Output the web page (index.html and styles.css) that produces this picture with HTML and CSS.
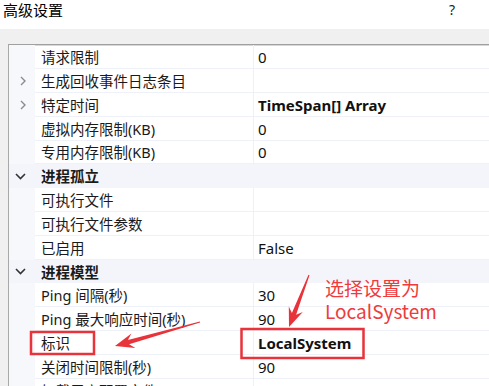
FILE: index.html
```html
<!DOCTYPE html>
<html>
  <head>
    <meta charset="utf-8">
    <title>高级设置</title>
    <link rel="stylesheet" href="styles.css">
  </head>
  <body>
    <div class="titlebar">
      <span class="title">高级设置</span>
      <span class="help">?</span>
    </div>
    <div class="band"></div>

    <div class="grid">
      <div class="row"><div class="gut"></div><div class="name">请求限制</div><div class="val">0</div></div>
      <div class="row"><div class="gut"><svg class="chev-r" width="6" height="10" viewBox="0 0 6 10"><path d="M1 1 L5 5 L1 9" fill="none" stroke="#8c8c8c" stroke-width="1.4"/></svg></div><div class="name">生成回收事件日志条目</div><div class="val"></div></div>
      <div class="row"><div class="gut"><svg class="chev-r" width="6" height="10" viewBox="0 0 6 10"><path d="M1 1 L5 5 L1 9" fill="none" stroke="#8c8c8c" stroke-width="1.4"/></svg></div><div class="name">特定时间</div><div class="val bold">TimeSpan[] Array</div></div>
      <div class="row"><div class="gut"></div><div class="name">虚拟内存限制(KB)</div><div class="val">0</div></div>
      <div class="row"><div class="gut"></div><div class="name">专用内存限制(KB)</div><div class="val">0</div></div>
      <div class="row cat"><div class="gut"><svg class="chev-d" width="11" height="7" viewBox="0 0 11 7"><path d="M1 1 L5.5 5.5 L10 1" fill="none" stroke="#333" stroke-width="1.6"/></svg></div><div class="name">进程孤立</div></div>
      <div class="row"><div class="gut"></div><div class="name">可执行文件</div><div class="val"></div></div>
      <div class="row"><div class="gut"></div><div class="name">可执行文件参数</div><div class="val"></div></div>
      <div class="row"><div class="gut"></div><div class="name">已启用</div><div class="val">False</div></div>
      <div class="row cat"><div class="gut"><svg class="chev-d" width="11" height="7" viewBox="0 0 11 7"><path d="M1 1 L5.5 5.5 L10 1" fill="none" stroke="#333" stroke-width="1.6"/></svg></div><div class="name">进程模型</div></div>
      <div class="row"><div class="gut"></div><div class="name">Ping 间隔(秒)</div><div class="val">30</div></div>
      <div class="row"><div class="gut"></div><div class="name">Ping 最大响应时间(秒)</div><div class="val">90</div></div>
      <div class="row"><div class="gut"></div><div class="name">标识</div><div class="val bold">LocalSystem</div></div>
      <div class="row"><div class="gut"></div><div class="name">关闭时间限制(秒)</div><div class="val">90</div></div>
      <div class="row"><div class="gut"></div><div class="name">加载用户配置文件</div><div class="val">True</div></div>
    </div>

    <!-- red annotations drawn over the grid -->
    <svg class="marks" width="489" height="386" viewBox="0 0 489 386">
      <rect x="31" y="332" width="63" height="22" fill="none" stroke="#e8333a" stroke-width="2.5"/>
      <rect x="241.5" y="329" width="122" height="29" fill="none" stroke="#e8333a" stroke-width="2.5"/>
      <polygon fill="#e8333a" points="115,346 135.4,348 129.1,344.3 200.1,322.5 199.9,321.5 127.9,340.1 131.4,333.6"/>
      <polygon fill="#e8333a" points="289,327 302.8,312 296.1,314.7 309.5,275.2 308.5,274.8 291.9,313.1 288.8,306.6"/>
    </svg>
    <div class="note">
      <div class="note-line">选择设置为</div>
      <div class="note-line">LocalSystem</div>
    </div>
  </body>
</html>
```

FILE: styles.css
```css
body {
  margin: 0;
  width: 489px;
  height: 386px;
  overflow: hidden;
  position: relative;
  background: #f0f0f0;
  font-family: "Noto Sans", "Noto Sans CJK SC", sans-serif;
  color: #1a1a1a;
}
.titlebar {
  height: 29px;
  background: #fff;
  display: flex;
  justify-content: space-between;
  align-items: flex-start;
}
.title {
  font-family: "Noto Sans CJK SC", sans-serif;
  font-size: 15px;
  line-height: 20px;
  margin-left: 3px;
  color: #000;
}
.help {
  font-size: 14px;
  line-height: 20px;
  margin-right: 34px;
  color: #222;
}
.band {
  height: 15px;
}
.grid {
  margin-left: 8px;
  background: #fff;
  border-left: 1px solid #a8a8a8;
  border-top: 1px solid #a0a0a0;
  box-shadow: inset 0 1px 0 #d8d8d8;
}
.row {
  display: grid;
  grid-template-columns: 26px 219px 1fr;
  height: 23.85px;
  font-size: 14.5px;
  line-height: 22px;
}
.gut {
  background: #f7f8fb;
  display: flex;
  align-items: center;
  justify-content: center;
}
.name {
  padding-left: 6px;
  padding-top: 1px;
  border-bottom: 1px solid #eef1f7;
  border-right: 1px solid #eef1f7;
  white-space: nowrap;
}
.val {
  padding-left: 4px;
  padding-top: 1px;
  border-bottom: 1px solid #eef1f7;
  color: #111;
  font-size: 15px;
  white-space: nowrap;
}
.bold {
  font-weight: bold;
}
.cat {
  background: #f3f5fa;
}
.cat .gut {
  background: #f3f5fa;
}
.cat .name {
  grid-column: 2 / 4;
  font-weight: bold;
  border: none;
}
.chev-r {
  margin-left: 2px;
}
.chev-d {
  margin-left: -4px;
}
.marks {
  position: absolute;
  left: 0;
  top: 0;
}
.note {
  position: absolute;
  left: 325px;
  top: 276px;
  color: #ee3b3b;
  font-family: "Noto Sans CJK SC", sans-serif;
  font-size: 19px;
}
.note-line {
  height: 23px;
  line-height: 23px;
}
```
